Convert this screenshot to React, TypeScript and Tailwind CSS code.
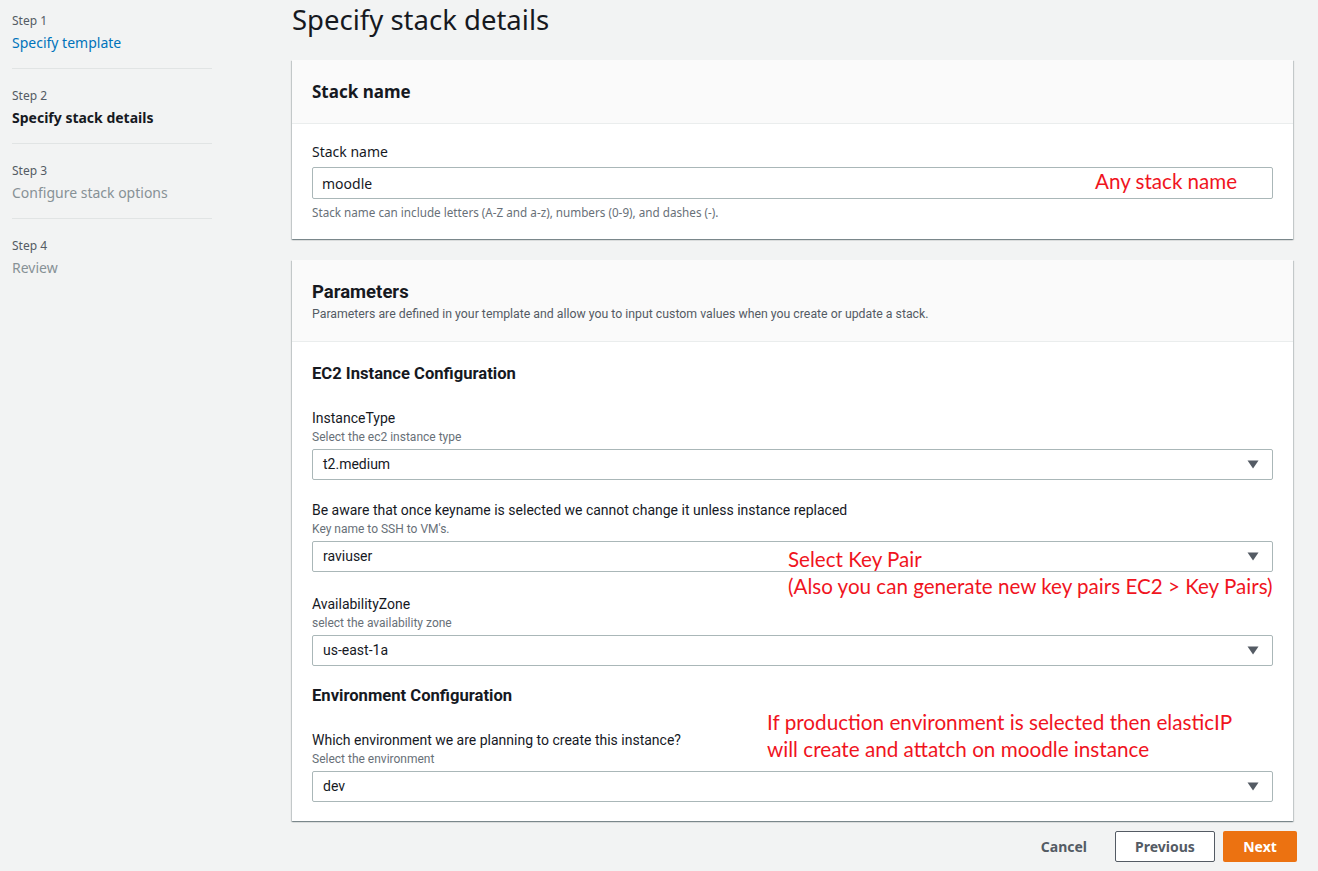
import React from "react";

const ember = { fontFamily: '"Noto Sans", "Open Sans", Arial, sans-serif' };
const cond = { fontFamily: 'Roboto, "Noto Sans", Arial, sans-serif' };
const anno = { fontFamily: 'Lato, "Open Sans", Arial, sans-serif' };

function Arrow() {
  return (
    <svg width="12" height="9" viewBox="0 0 12 9" className="shrink-0">
      <path d="M0.5 0.5 L11.5 0.5 L6 8.5 Z" fill="#545b64" />
    </svg>
  );
}

function Select({ value }: { value: string }) {
  return (
    <div className="h-[31px] bg-white border border-[#aab7b8] rounded-[2px] flex items-center justify-between pl-[10px] pr-[13px]">
      <span className="text-[14px] text-[#16191f]" style={cond}>{value}</span>
      <Arrow />
    </div>
  );
}

function Field({ label, desc, value, cls = "" }: { label: string; desc: string; value: string; cls?: string }) {
  return (
    <div style={cond} className={cls}>
      <div className="text-[14px] leading-[18px] text-[#16191f]">{label}</div>
      <div className="text-[12px] leading-[16px] text-[#687078] mt-[2px] mb-[4px]">{desc}</div>
      <Select value={value} />
    </div>
  );
}

function Step({ n, title, cls, divider }: { n: number; title: string; cls: string; divider: boolean }) {
  return (
    <div className={divider ? "border-b border-[#e1e4e4] pb-[15px] mb-[19px]" : ""}>
      <div className="text-[12px] leading-[16px] text-[#545b64]">Step {n}</div>
      <div className={"text-[14px] leading-[20px] mt-[4px] " + cls}>{title}</div>
    </div>
  );
}

const shadow =
  "bg-white shadow-[0_1px_1px_0_rgba(0,28,36,0.3),1px_1px_1px_0_rgba(0,28,36,0.15),-1px_1px_1px_0_rgba(0,28,36,0.15)]";

export default function App() {
  return (
    <div className="min-h-[871px] w-[1318px] bg-[#f2f3f3] flex relative" style={ember}>
      <aside className="w-[292px] shrink-0 pl-[12px] pt-[13px]">
        <div className="w-[200px]">
          <Step n={1} title="Specify template" cls="text-[#0073bb]" divider />
          <Step n={2} title="Specify stack details" cls="text-[#16191f] font-bold" divider />
          <Step n={3} title="Configure stack options" cls="text-[#879196]" divider />
          <Step n={4} title="Review" cls="text-[#879196]" divider={false} />
        </div>
      </aside>
      <main className="w-[1001px] shrink-0">
        <h1 className="text-[27.5px] leading-[40px] text-[#16191f] font-normal">Specify stack details</h1>

        <section className={"mt-[20px] " + shadow}>
          <div className="h-[64px] bg-[#fafafa] border-b border-[#eaeded] px-[20px] flex items-center">
            <h2 className="text-[17px] font-bold text-[#16191f]">Stack name</h2>
          </div>
          <div className="px-[20px] pt-[18px] pb-[19px]">
            <div className="text-[14px] leading-[20px] text-[#16191f]">Stack name</div>
            <div className="mt-[5px] h-[32px] border border-[#aab7b8] rounded-[2px] flex items-center pl-[9px]">
              <span className="text-[14px] text-[#16191f]">moodle</span>
            </div>
            <div className="text-[11.7px] leading-[16px] text-[#687078] mt-[5px]">
              Stack name can include letters (A-Z and a-z), numbers (0-9), and dashes (-).
            </div>
          </div>
        </section>

        <section className={"mt-[21px] " + shadow}>
          <div className="h-[82px] bg-[#fafafa] border-b border-[#eaeded] px-[20px] pt-[20px]" style={cond}>
            <h2 className="text-[18.5px] leading-[24px] font-bold text-[#16191f]">Parameters</h2>
            <div className="text-[12.3px] leading-[16px] text-[#545b64] mt-[2px]">
              Parameters are defined in your template and allow you to input custom values when you create or update a stack.
            </div>
          </div>
          <div className="px-[20px] pt-[21px] pb-[19px]" style={cond}>
            <h3 className="text-[16.6px] leading-[22px] font-bold text-[#16191f]">EC2 Instance Configuration</h3>
            <div className="mt-[24px] flex flex-col">
              <Field label="InstanceType" desc="Select the ec2 instance type" value="t2.medium" />
              <Field
                cls="mt-[21px]"
                label="Be aware that once keyname is selected we cannot change it unless instance replaced"
                desc="Key name to SSH to VM's."
                value="raviuser"
              />
              <Field cls="mt-[23px]" label="AvailabilityZone" desc="select the availability zone" value="us-east-1a" />
            </div>
            <h3 className="mt-[19px] text-[16.6px] leading-[22px] font-bold text-[#16191f]">Environment Configuration</h3>
            <div className="mt-[24px]">
              <Field
                label="Which environment we are planning to create this instance?"
                desc="Select the environment"
                value="dev"
              />
            </div>
          </div>
        </section>

        <div className="mt-[10px] -mr-[4px] flex justify-end items-center gap-[8px]">
          <button className="h-[31px] px-[20px] text-[14px] font-bold text-[#545b64]">Cancel</button>
          <button className="h-[31px] w-[100px] bg-white border border-[#545b64] rounded-[2px] text-[14px] font-bold text-[#545b64]">Previous</button>
          <button className="h-[31px] w-[74px] bg-[#ec7211] rounded-[2px] text-[14px] font-bold text-white">Next</button>
        </div>
      </main>

      <div className="absolute left-[1095px] top-[168px] text-[20.6px] leading-[26px] text-[#f0141e]" style={anno}>Any stack name</div>
      <div className="absolute left-[788px] top-[546px] text-[20.6px] leading-[27px] text-[#f0141e]" style={anno}>
        <div>Select Key Pair</div>
        <div>(Also you can generate new key pairs EC2 &gt; Key Pairs)</div>
      </div>
      <div className="absolute left-[767px] top-[709px] text-[20.7px] leading-[27px] text-[#f0141e]" style={anno}>
        <div>If production environment is selected then elasticIP</div>
        <div>will create and attatch on moodle instance</div>
      </div>
    </div>
  );
}
